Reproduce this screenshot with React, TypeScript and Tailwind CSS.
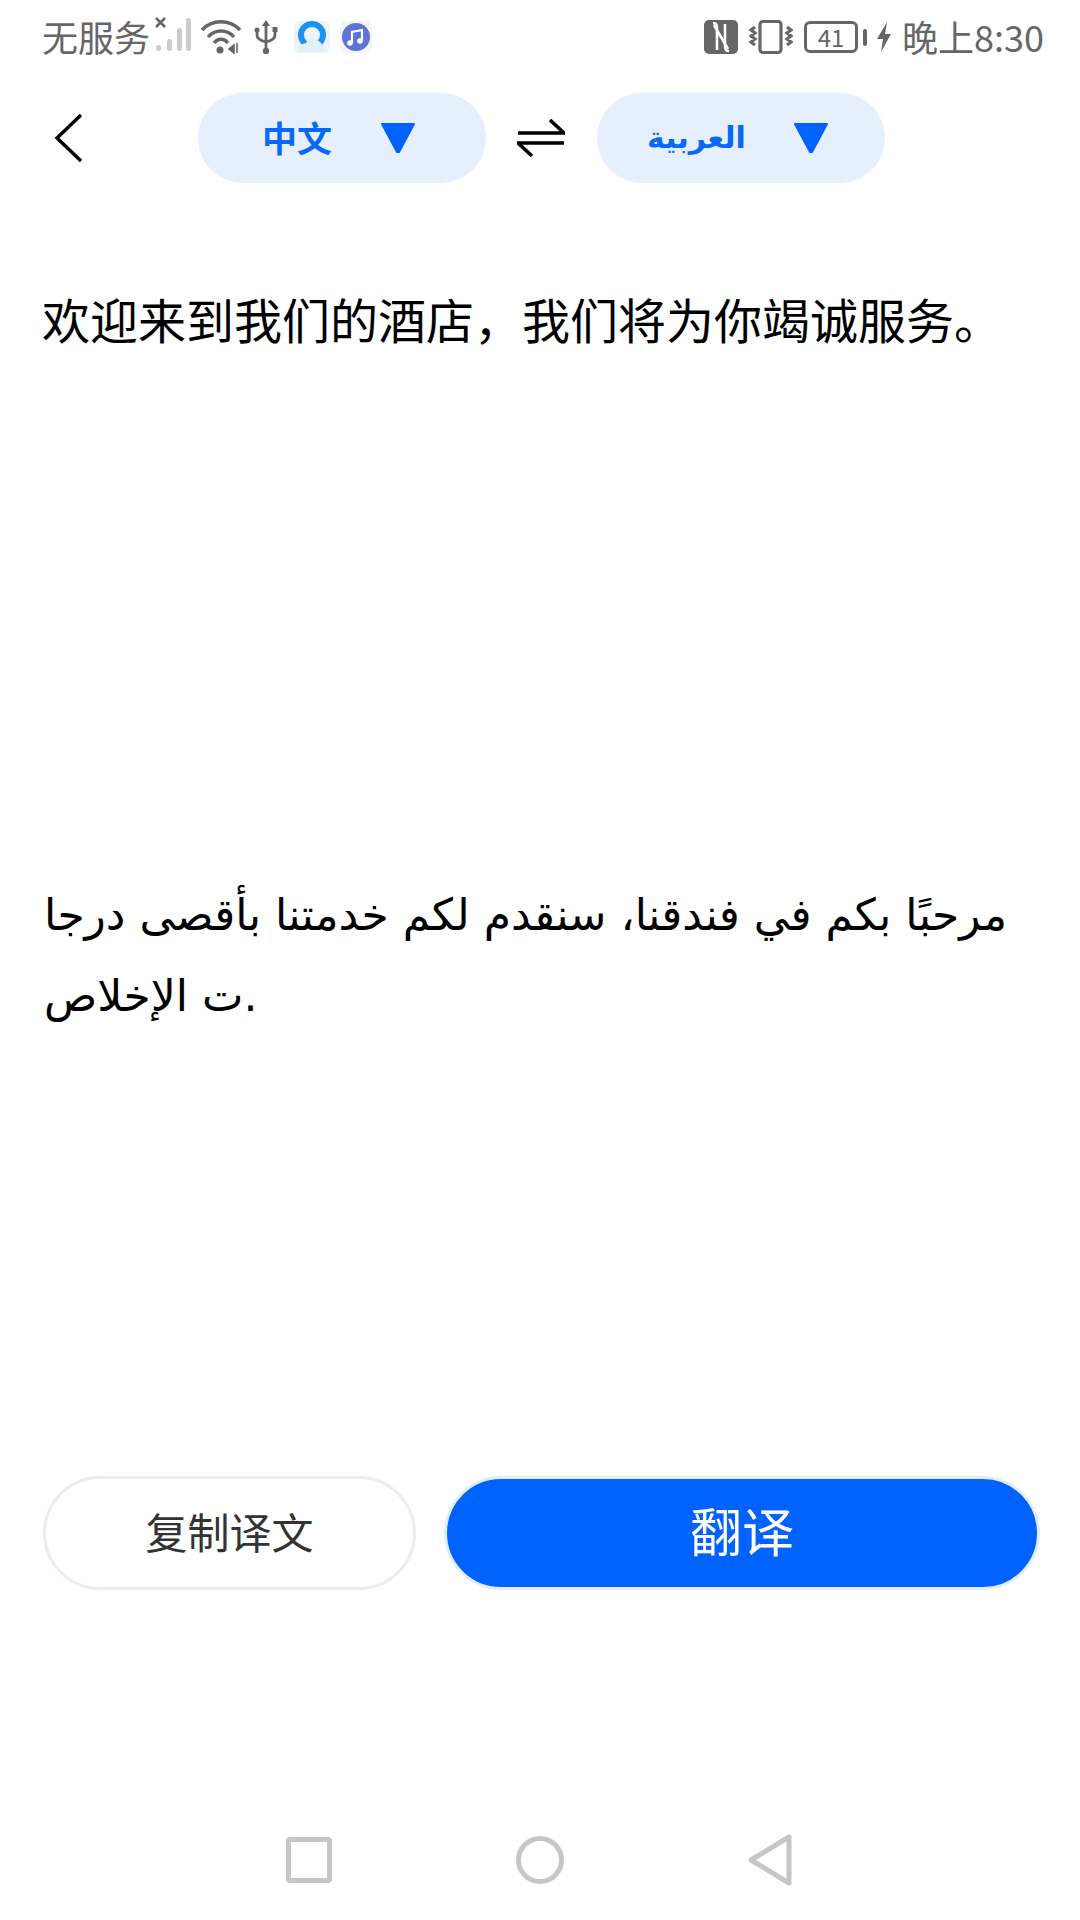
export default function App() {
  const font = { fontFamily: '"Noto Sans CJK SC", sans-serif' };
  return (
    <div className="w-[1080px] h-[1920px] bg-white overflow-hidden text-black" style={font}>
      {/* status bar */}
      <div className="h-[74px] flex items-center justify-between pl-[42px] pr-[36px] text-[#666666]">
        <div className="flex items-center">
          <span className="text-[36px] leading-[44px] -mt-[3px]">无服务</span>
          <svg width="40" height="40" viewBox="0 0 40 40" className="ml-[4px] -mt-[4px]">
            <path d="M2 3l9 9M11 3l-9 9" stroke="#666" strokeWidth="2.6" />
            <rect x="2" y="30" width="5" height="6" rx="2.5" fill="#ccc" />
            <rect x="13" y="24" width="5" height="12" rx="2.5" fill="#ccc" />
            <rect x="23" y="13" width="5" height="23" rx="2.5" fill="#ccc" />
            <rect x="32" y="3" width="5" height="33" rx="2.5" fill="#ccc" />
          </svg>
          <svg width="42" height="36" viewBox="0 0 42 36" className="ml-[6px]">
            <path d="M2 11C12 0 30 0 40 11" stroke="#666" strokeWidth="3.4" fill="none" />
            <path d="M8 18C15 10 27 10 34 18" stroke="#666" strokeWidth="3.4" fill="none" />
            <path d="M14 24C18 19 24 19 28 24" stroke="#666" strokeWidth="3.4" fill="none" />
            <circle cx="20" cy="31" r="3.5" fill="#666" />
            <path d="M34 26v8l-5-4zM37 24v10" stroke="#666" strokeWidth="1.6" fill="#666" />
          </svg>
          <svg width="24" height="36" viewBox="0 0 24 36" className="ml-[12px]">
            <path d="M12 1l4 6H8z" fill="#666" />
            <path d="M12 5v27M3 12v4q0 5 9 7q9-2 9-7v-4" stroke="#666" strokeWidth="2.8" fill="none" />
            <circle cx="12" cy="32" r="3.2" fill="#666" />
            <circle cx="3" cy="11" r="2.5" fill="#666" />
            <rect x="18.5" y="8" width="5" height="5" fill="#666" />
          </svg>
          <svg width="36" height="32" viewBox="0 0 36 32" className="ml-[16px]">
            <rect width="36" height="32" rx="5" fill="#eef3f8" />
            <circle cx="18" cy="14" r="11" stroke="#1c93ee" strokeWidth="6" fill="none" />
            <path d="M5 30q-1-7 7-8q4-6 10-3q6 1 9 11z" fill="#dff0fb" />
          </svg>
          <svg width="32" height="32" viewBox="0 0 32 32" className="ml-[10px]">
            <rect width="32" height="32" rx="6" fill="#f3f3fa" />
            <circle cx="16" cy="16" r="14" fill="#5c74d8" />
            <path d="M12 22V11l10-2v11" stroke="#fff" strokeWidth="2.2" fill="none" />
            <circle cx="10" cy="22" r="2.8" fill="#fff" />
            <circle cx="20" cy="20" r="2.8" fill="#fff" />
          </svg>
        </div>
        <div className="flex items-center">
          <svg width="34" height="34" viewBox="0 0 34 34">
            <rect width="34" height="34" rx="5" fill="#666" />
            <path d="M9 3q4 0 4 5v22M25 31q-4 0-4-5V4M10 5l14 24" stroke="#fff" strokeWidth="2.6" fill="none" />
          </svg>
          <svg width="44" height="34" viewBox="0 0 44 34" className="ml-[11px]">
            <rect x="11" y="1.5" width="21" height="31" rx="3" stroke="#666" strokeWidth="3.2" fill="none" />
            <path d="M6 7L2 10l4 3-4 3 4 3-4 3 4 3M38 7l4 3-4 3 4 3-4 3 4 3-4 3" stroke="#666" strokeWidth="3.2" fill="none" />
          </svg>
          <div className="ml-[11px] w-[54px] h-[32px] border-[3px] border-[#666666] rounded-[6px] flex items-center justify-center text-[24px] leading-none">41</div>
          <div className="ml-[5px] w-[4px] h-[17px] rounded-[2px] bg-[#666666]" />
          <svg width="16" height="30" viewBox="0 0 16 30" className="ml-[9px]">
            <path d="M11 0L1 17h6l-2 13 10-18H9z" fill="#666" />
          </svg>
          <span className="ml-[10px] text-[36px] leading-[44px] -mt-[3px] whitespace-nowrap">晚上8:30</span>
        </div>
      </div>

      {/* header */}
      <div className="relative h-[90px] mt-[19px] flex items-center pl-[198px]">
        <svg width="30" height="50" viewBox="0 0 30 50" className="absolute left-[54px] top-[20px]">
          <path d="M27 2L3 25l24 23" stroke="#000" strokeWidth="3.4" fill="none" />
        </svg>
        <div className="w-[288px] h-[90px] rounded-[45px] bg-[#e6effd] flex items-center pl-[64px] gap-[48px]">
          <span className="text-[35px] font-bold text-[#0a68f8] leading-none -mt-[4px]">中文</span>
          <Tri />
        </div>
        <svg width="48" height="38" viewBox="0 0 48 38" className="ml-[31px] mr-[32px]">
          <path d="M1 14h46L33 1M47 24H1l14 13" stroke="#000" strokeWidth="3.6" fill="none" />
        </svg>
        <div className="w-[288px] h-[90px] rounded-[45px] bg-[#e6effd] flex items-center pl-[50px] gap-[48px]">
          <span className="w-[98px] text-[30px] font-bold text-[#0a68f8] leading-none" style={{ fontFamily: '"DejaVu Sans", sans-serif' }}>العربية</span>
          <Tri />
        </div>
      </div>

      {/* source */}
      <div className="mt-[100px] pl-[42px] text-[48px] leading-[70px]">欢迎来到我们的酒店，我们将为你竭诚服务。</div>

      {/* translation */}
      <div className="mt-[521px] pl-[44px] text-[44px] leading-[81px] whitespace-nowrap" style={{ fontFamily: '"DejaVu Sans", sans-serif' }}>
        <div>مرحبًا بكم في فندقنا، سنقدم لكم خدمتنا بأقصى درجا</div>
        <div>ت الإخلاص.</div>
      </div>

      {/* buttons */}
      <div className="mt-[440px] pl-[43px] pr-[40px] flex gap-[28px]">
        <div className="w-[373px] h-[114px] rounded-[57px] border-[3px] border-[#ebedf2] flex items-center justify-center pb-[6px] text-[42px] text-[#333333]">复制译文</div>
        <div className="flex-1 h-[114px] rounded-[57px] border-[3px] border-[#e4ecf8] bg-[#0062ff] flex items-center justify-center pb-[6px] text-[52px] text-white">翻译</div>
      </div>

      {/* nav */}
      <div className="mt-[245px] h-[50px] flex items-center pl-[286px]">
        <div className="w-[46px] h-[46px] border-[5px] border-[#c6c6c6] rounded-[4px]" />
        <div className="ml-[184px] w-[48px] h-[48px] border-[5px] border-[#c6c6c6] rounded-full" />
        <svg width="44" height="52" viewBox="0 0 44 52" className="ml-[184px]">
          <path d="M41 3v46L3 26z" stroke="#c6c6c6" strokeWidth="5" strokeLinejoin="round" fill="none" />
        </svg>
      </div>
    </div>
  );
}

function Tri() {
  return (
    <svg width="36" height="32" viewBox="0 0 36 32">
      <path d="M2 2h32L19 30h-2z" fill="#0062ff" stroke="#0062ff" strokeWidth="2" strokeLinejoin="round" />
    </svg>
  );
}
